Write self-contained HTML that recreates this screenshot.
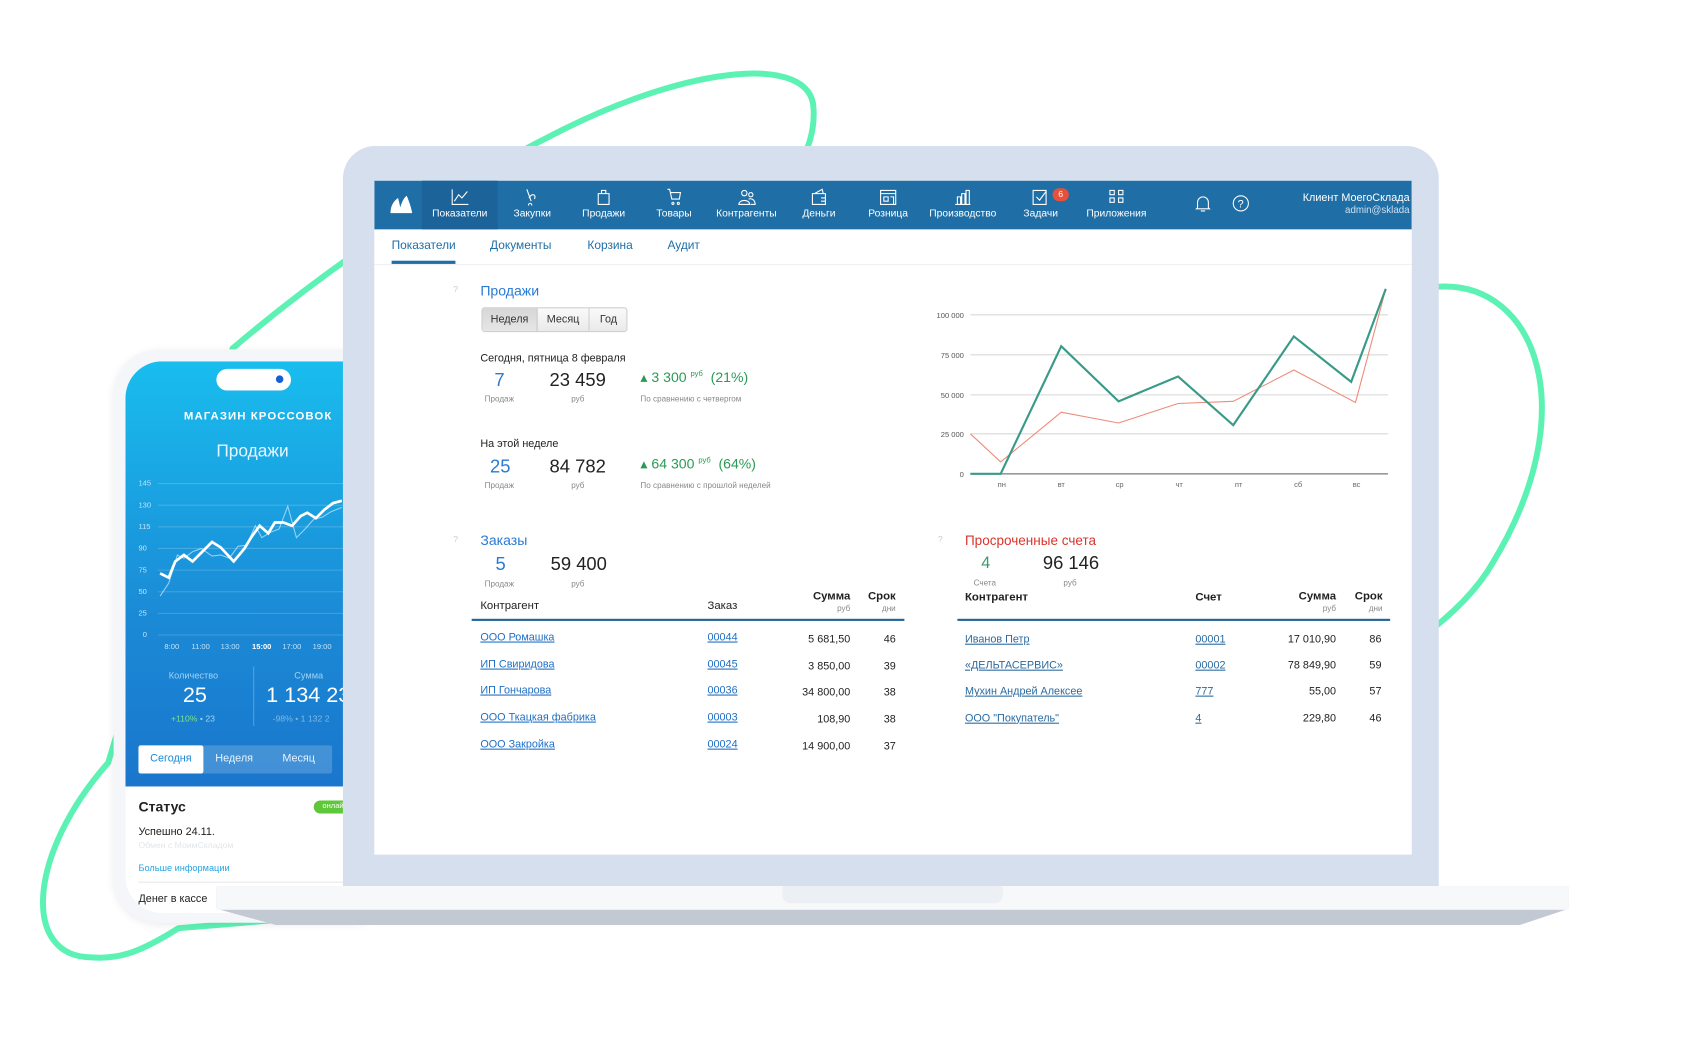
<!DOCTYPE html>
<html><head><meta charset="utf-8"><style>
*{margin:0;padding:0;box-sizing:border-box}
html,body{width:1696px;height:1040px;overflow:hidden;background:#fff;font-family:"Liberation Sans","DejaVu Sans",sans-serif}
#w{position:absolute;left:0;top:0;width:1568px;height:962px;transform:scale(1.0818);transform-origin:0 0}
.a{position:absolute;white-space:nowrap}
.nav .it{position:absolute;top:0;height:45px;width:70px;margin-left:-35px;text-align:center;color:#fff;font-size:9.5px}
.nav .it svg{display:block;margin:7px auto 2px;width:18px;height:16px}
.lnk{color:#1f6fc5;text-decoration:underline;font-size:10px}
.num{font-size:10px;color:#222;text-align:right}
.sm{font-size:7.5px;color:#888}
</style></head><body><div id="w">
<svg class="a" style="left:0;top:0" width="1568" height="962">
<path d="M85 885 C20 885 25 790 100 705 L215 322 C300 250 400 180 520 120 C640 60 750 50 752 100 C753 115 750 128 745 140 L1330 265 C1420 260 1465 380 1380 520 C1300 660 900 800 165 858 C130 880 110 887 85 885Z" fill="none" stroke="#5cf2b4" stroke-width="5.5"/>
</svg>
<!-- phone -->
<div class="a" style="left:105px;top:323px;width:260px;height:530px;background:#f4f6f9;border-radius:42px;box-shadow:0 2px 8px rgba(0,0,0,.08)"></div>
<div class="a" style="left:116px;top:334px;width:240px;height:510px;background:#fff;border-radius:34px;overflow:hidden">
 <div class="a" style="left:0;top:0;width:240px;height:393px;background:linear-gradient(#19bdee,#1b8ad6 60%,#1a76cc)"></div>
 <div class="a" style="left:84px;top:7px;width:69px;height:20px;background:#fff;border-radius:10px"><div class="a" style="left:55px;top:6px;width:7px;height:7px;border-radius:50%;background:#1560d0"></div></div>
 <div class="a" style="left:54px;top:45px;color:#fff;font-size:10.5px;font-weight:bold;letter-spacing:1px">МАГАЗИН КРОССОВОК</div>
 <div class="a" style="left:84px;top:75px;color:#e8f6ff;font-size:16px">Продажи</div>
 <svg class="a" style="left:0;top:105px" width="240" height="170">
  <g fill="#bfe4fa" font-size="7" font-family="Liberation Sans">
  <text x="12" y="10">145</text><text x="12" y="30">130</text><text x="12" y="50">115</text><text x="12" y="70">90</text><text x="12" y="90">75</text><text x="12" y="110">50</text><text x="12" y="130">25</text><text x="16" y="150">0</text>
  <text x="36" y="161">8:00</text><text x="61" y="161">11:00</text><text x="88" y="161">13:00</text><text x="117" y="161" fill="#fff" font-weight="bold">15:00</text><text x="145" y="161">17:00</text><text x="173" y="161">19:00</text></g>
  <g stroke="rgba(255,255,255,.18)"><path d="M30 8H240M30 28H240M30 48H240M30 68H240M30 88H240M30 108H240M30 128H240M30 148H240"/></g>
  <path d="M32 112 L40 100 L48 74 L54 77 L62 71 L70 68 L80 75 L88 74 L96 77 L104 66 L112 65 L120 47 L126 58 L134 53 L142 50 L150 29 L158 58 L166 50 L174 41 L182 39 L190 34 L200 30" fill="none" stroke="rgba(255,255,255,.55)" stroke-width="1"/>
  <path d="M32 91 L40 95 L46 80 L54 74 L62 80 L72 70 L80 62 L88 67 L100 80 L110 68 L116 58 L124 47 L132 54 L138 44 L146 44 L154 47 L162 38 L168 35 L176 40 L184 32 L192 26 L200 24" fill="none" stroke="#fff" stroke-width="2.5"/>
 </svg>
 <div class="a" style="left:40px;top:285px;color:#9fd4f3;font-size:8.5px">Количество</div>
 <div class="a" style="left:53px;top:298px;color:#fff;font-size:20px">25</div>
 <div class="a" style="left:42px;top:326px;font-size:8px;color:#7ae58a">+110% <span style="color:#9fd4f3">• 23</span></div>
 <div class="a" style="left:118px;top:282px;width:1px;height:55px;background:rgba(255,255,255,.25)"></div>
 <div class="a" style="left:156px;top:285px;color:#9fd4f3;font-size:8.5px">Сумма</div>
 <div class="a" style="left:130px;top:298px;color:#fff;font-size:20px">1 134 23</div>
 <div class="a" style="left:136px;top:326px;font-size:8px;color:#7fb8e4">-98% • 1 132 2</div>
 <div class="a" style="left:12px;top:355px;width:179px;height:26px;background:rgba(255,255,255,.18);border-radius:2px"></div>
 <div class="a" style="left:12px;top:355px;width:60px;height:26px;background:#fff;border-radius:2px;color:#1a8ad6;font-size:10px;line-height:26px;text-align:center">Сегодня</div>
 <div class="a" style="left:83px;top:362px;color:#e6f4ff;font-size:10px">Неделя</div>
 <div class="a" style="left:145px;top:362px;color:#e6f4ff;font-size:10px">Месяц</div>
 <div class="a" style="left:12px;top:404px;color:#222;font-size:13px;font-weight:bold">Статус</div>
 <div class="a" style="left:174px;top:406px;width:40px;height:12px;border-radius:6px;background:#5ec73a;color:#fff;font-size:7px;line-height:12px;padding-left:8px">онлайн</div>
 <div class="a" style="left:12px;top:430px;color:#222;font-size:10px">Успешно 24.11.</div>
 <div class="a" style="left:12px;top:443px;color:#e2e6ea;font-size:8px">Обмен с МоимСкладом</div>
 <div class="a" style="left:12px;top:463px;color:#29a3e0;font-size:8.5px">Больше информации</div>
 <div class="a" style="left:12px;top:481px;width:220px;height:1px;background:#e8e8e8"></div>
 <div class="a" style="left:12px;top:492px;color:#222;font-size:10px">Денег в кассе</div>
</div>
<!-- laptop base -->
<svg class="a" style="left:195px;top:815px" width="1260" height="45">
 <path d="M5 5 H1255 V25 L1210 40 H60 L5 25Z" fill="#c3c9d3"/>
 <rect x="5" y="4" width="1250" height="22" fill="#f7f8fa"/>
 <rect x="528" y="0" width="204" height="20" rx="8" fill="#eceff3"/>
</svg>
<!-- lid -->
<div class="a" style="left:317px;top:135px;width:1013px;height:684px;background:#d6dfee;border-radius:30px 30px 0 0"></div>
<div class="a" style="left:346px;top:167px;width:959px;height:623px;background:#fff;overflow:hidden">
 <div class="a nav" style="left:0;top:0;width:959px;height:45px;background:#1f6ea6">
  <svg class="a" style="left:13px;top:12px" width="24" height="20"><path d="M2 18 C2 10 6 6 9 4 C10 8 11 12 12 18Z M10 18 C11 10 14 4 17 2 C19 7 21 12 22 18Z" fill="#fff"/></svg>
  <div class="a" style="left:44px;top:0;width:70px;height:45px;background:#1b6399"></div>
  <div class="it" style="left:79px"><svg viewBox="0 0 18 16" fill="none" stroke="#fff" stroke-width="1"><path d="M2 1V15H17M4 12L8 6L11 9L16 3"/></svg>Показатели</div>
  <div class="it" style="left:146px"><svg viewBox="0 0 18 16" fill="none" stroke="#fff"><path d="M4 1L8 12M6 9C9 4 13 6 11 10M7 14A1.5 1.5 0 1 0 7.1 14"/></svg>Закупки</div>
  <div class="it" style="left:212px"><svg viewBox="0 0 18 16" fill="none" stroke="#fff"><path d="M4 5H14V15H4ZM7 5V2H11V5"/></svg>Продажи</div>
  <div class="it" style="left:277px"><svg viewBox="0 0 18 16" fill="none" stroke="#fff"><path d="M3 1H5L7 10H14L15 4H6M8 13A1 1 0 1 0 8.1 13M13 13A1 1 0 1 0 13.1 13"/></svg>Товары</div>
  <div class="it" style="left:344px"><svg viewBox="0 0 18 16" fill="none" stroke="#fff"><path d="M7 2A2.5 2.5 0 1 0 7.1 2M2 15C2 10 12 10 12 15ZM13 4A2 2 0 1 0 13.1 4M11 10C14 9 17 11 17 15H13"/></svg>Контрагенты</div>
  <div class="it" style="left:411px"><svg viewBox="0 0 18 16" fill="none" stroke="#fff"><path d="M3 5H15V15H3ZM5 5L12 1L13 5M11 9H15V12H11"/></svg>Деньги</div>
  <div class="it" style="left:475px"><svg viewBox="0 0 18 16" fill="none" stroke="#fff"><path d="M2 2H16V15H2ZM2 5H16M5 8H9V12H5ZM11 8H14V15"/></svg>Розница</div>
  <div class="it" style="left:544px"><svg viewBox="0 0 18 16" fill="none" stroke="#fff"><path d="M2 15H16M4 15V8H7V15M8 15V5H11V15M12 15V2H15V15"/></svg>Производство</div>
  <div class="it" style="left:616px"><svg viewBox="0 0 18 16" fill="none" stroke="#fff"><path d="M2 2H14V15H2ZM5 8L8 11L14 3"/></svg>Задачи</div>
  <div class="a" style="left:627px;top:7px;width:15px;height:12px;border-radius:6px;background:#e8503a;color:#fff;font-size:8px;text-align:center;line-height:12px">6</div>
  <div class="it" style="left:686px"><svg viewBox="0 0 18 16" fill="none" stroke="#fff"><path d="M3 2H7V6H3ZM11 2H15V6H11ZM3 9H7V13H3ZM11 9H15V13H11Z"/></svg>Приложения</div>
  <svg class="a" style="left:758px;top:12px" width="16" height="18" fill="none" stroke="#fff"><path d="M3 13V8A5 5 0 0 1 13 8V13L14 14H2ZM6 16H10"/></svg>
  <svg class="a" style="left:793px;top:12px" width="18" height="18" fill="none" stroke="#fff"><circle cx="8" cy="9" r="7"/><text x="5" y="13" fill="#fff" stroke="none" font-size="10" font-family="Liberation Sans">?</text></svg>
  <div class="a" style="right:2px;top:11px;color:#fff;font-size:10px;text-align:right;line-height:11px">Клиент МоегоСклада<br><span style="font-size:9px;color:#cfe2f2">admin@sklada</span></div>
 </div>
 <div class="a" style="left:16px;top:54px;color:#1f6ea6;font-size:11px">Показатели</div>
 <div class="a" style="left:16px;top:74px;width:59px;height:3px;background:#1f6ea6"></div>
 <div class="a" style="left:107px;top:54px;color:#1f6ea6;font-size:11px">Документы</div>
 <div class="a" style="left:197px;top:54px;color:#1f6ea6;font-size:11px">Корзина</div>
 <div class="a" style="left:271px;top:54px;color:#1f6ea6;font-size:11px">Аудит</div>
 <div class="a" style="left:0;top:77px;width:959px;height:1px;background:#eef0f3"></div>
</div>
<!-- content -->
<div class="a" style="left:419px;top:263px;color:#bcd;font-size:8px">?</div>
<div class="a" style="left:444px;top:261px;color:#2a7bd4;font-size:13px">Продажи</div>
<div class="a" style="left:445px;top:284px;width:135px;height:23px;border:1px solid #cfcfcf;border-radius:3px;background:linear-gradient(#fafafa,#eaeaea);font-size:10px;color:#333">
 <div class="a" style="left:0;top:0;width:51px;height:21px;background:linear-gradient(#d6d6d6,#e6e6e6);border-right:1px solid #c8c8c8;line-height:21px;text-align:center">Неделя</div>
 <div class="a" style="left:51px;top:0;width:48px;height:21px;border-right:1px solid #d0d0d0;line-height:21px;text-align:center">Месяц</div>
 <div class="a" style="left:99px;top:0;width:35px;line-height:21px;text-align:center">Год</div>
</div>
<div class="a" style="left:444px;top:326px;font-size:10px;color:#222">Сегодня, пятница 8 февраля</div>
<div class="a" style="left:457px;top:342px;font-size:17px;color:#2a7bd4">7</div>
<div class="a" style="left:448px;top:358px" ><span class="sm">Продаж</span></div>
<div class="a" style="left:508px;top:342px;font-size:17px;color:#222">23 459</div>
<div class="a" style="left:528px;top:358px"><span class="sm">руб</span></div>
<div class="a" style="left:592px;top:341px;font-size:13px;color:#2a9a55">▴ 3 300 <sup style="font-size:7px">руб</sup>&nbsp; (21%)</div>
<div class="a" style="left:592px;top:358px"><span class="sm">По сравнению с четвергом</span></div>
<div class="a" style="left:444px;top:405px;font-size:10px;color:#222">На этой неделе</div>
<div class="a" style="left:453px;top:422px;font-size:17px;color:#2a7bd4">25</div>
<div class="a" style="left:448px;top:438px"><span class="sm">Продаж</span></div>
<div class="a" style="left:508px;top:422px;font-size:17px;color:#222">84 782</div>
<div class="a" style="left:528px;top:438px"><span class="sm">руб</span></div>
<div class="a" style="left:592px;top:421px;font-size:13px;color:#2a9a55">▴ 64 300 <sup style="font-size:7px">руб</sup>&nbsp; (64%)</div>
<div class="a" style="left:592px;top:438px"><span class="sm">По сравнению с прошлой неделей</span></div>
<svg class="a" style="left:850px;top:260px" width="450" height="200">
 <g font-family="Liberation Sans" font-size="7" fill="#555" text-anchor="end"><text x="41" y="34">100 000</text><text x="41" y="71">75 000</text><text x="41" y="108">50 000</text><text x="41" y="144">25 000</text><text x="41" y="181">0</text></g>
 <g stroke="#d8d8d8"><path d="M47 31H433M47 68H433M47 105H433M47 141H433"/></g>
 <path d="M47 178H433" stroke="#999" stroke-width="1.5"/>
 <g font-family="Liberation Sans" font-size="7" fill="#666" text-anchor="middle"><text x="76" y="190">пн</text><text x="131" y="190">вт</text><text x="185" y="190">ср</text><text x="240" y="190">чт</text><text x="295" y="190">пт</text><text x="350" y="190">сб</text><text x="404" y="190">вс</text></g>
 <path d="M47 141 L75 167 L131 121 L184 131 L239 113 L290 111 L346 82 L403 112 L431 7" fill="none" stroke="#ee8a7a" stroke-width="1"/>
 <path d="M47 178 L75 178 L131 60 L184 111 L239 88 L290 133 L346 51 L399 93 L431 7" fill="none" stroke="#3a9a88" stroke-width="2"/>
</svg>
<div class="a" style="left:419px;top:494px;color:#bcd;font-size:8px">?</div>
<div class="a" style="left:444px;top:492px;color:#2a7bd4;font-size:13px">Заказы</div>
<div class="a" style="left:458px;top:512px;font-size:17px;color:#2a7bd4">5</div>
<div class="a" style="left:448px;top:529px"><span class="sm">Продаж</span></div>
<div class="a" style="left:509px;top:512px;font-size:17px;color:#222">59 400</div>
<div class="a" style="left:528px;top:529px"><span class="sm">руб</span></div>
<div class="a" style="left:444px;top:554px;font-size:10.5px;color:#222">Контрагент</div>
<div class="a" style="left:654px;top:554px;font-size:10.5px;color:#222">Заказ</div>
<div class="a" style="left:740px;top:546px;width:46px;text-align:right;font-size:10.5px;font-weight:bold;color:#222;line-height:11px">Сумма<br><span class="sm" style="font-weight:normal">руб</span></div>
<div class="a" style="left:790px;top:546px;width:38px;text-align:right;font-size:10.5px;font-weight:bold;color:#222;line-height:11px">Срок<br><span class="sm" style="font-weight:normal">дни</span></div>
<div class="a" style="left:436px;top:572px;width:400px;height:2px;background:#24679c"></div>
<div class="a" style="left:444px;top:578px;line-height:24.7px"><div class="lnk">ООО Ромашка</div><div class="lnk">ИП Свиридова</div><div class="lnk">ИП Гончарова</div><div class="lnk">ООО Ткацкая фабрика</div><div class="lnk">ООО Закройка</div></div>
<div class="a" style="left:654px;top:578px;line-height:24.7px"><div class="lnk">00044</div><div class="lnk">00045</div><div class="lnk">00036</div><div class="lnk">00003</div><div class="lnk">00024</div></div>
<div class="a num" style="left:700px;top:580px;width:86px;line-height:24.7px">5 681,50<br>3 850,00<br>34 800,00<br>108,90<br>14 900,00</div>
<div class="a num" style="left:800px;top:580px;width:28px;line-height:24.7px">46<br>39<br>38<br>38<br>37</div>
<div class="a" style="left:867px;top:494px;color:#bcd;font-size:8px">?</div>
<div class="a" style="left:892px;top:493px;color:#d9342b;font-size:12.5px">Просроченные счета</div>
<div class="a" style="left:907px;top:512px;font-size:15px;color:#3a9a6a">4</div>
<div class="a" style="left:900px;top:528px"><span class="sm">Счета</span></div>
<div class="a" style="left:964px;top:511px;font-size:17px;color:#222">96 146</div>
<div class="a" style="left:983px;top:528px"><span class="sm">руб</span></div>
<div class="a" style="left:892px;top:546px;font-size:10.5px;font-weight:bold;color:#222">Контрагент</div>
<div class="a" style="left:1105px;top:546px;font-size:10.5px;font-weight:bold;color:#222">Счет</div>
<div class="a" style="left:1189px;top:546px;width:46px;text-align:right;font-size:10.5px;font-weight:bold;color:#222;line-height:11px">Сумма<br><span class="sm" style="font-weight:normal">руб</span></div>
<div class="a" style="left:1240px;top:546px;width:38px;text-align:right;font-size:10.5px;font-weight:bold;color:#222;line-height:11px">Срок<br><span class="sm" style="font-weight:normal">дни</span></div>
<div class="a" style="left:885px;top:572px;width:400px;height:2px;background:#24679c"></div>
<div class="a" style="left:892px;top:580px;line-height:24.2px"><div class="lnk" style="color:#2a6aa0">Иванов Петр</div><div class="lnk" style="color:#2a6aa0">«ДЕЛЬТАСЕРВИС»</div><div class="lnk" style="color:#2a6aa0">Мухин Андрей Алексее</div><div class="lnk" style="color:#2a6aa0">ООО "Покупатель"</div></div>
<div class="a" style="left:1105px;top:580px;line-height:24.2px"><div class="lnk" style="color:#2a6aa0">00001</div><div class="lnk" style="color:#2a6aa0">00002</div><div class="lnk" style="color:#2a6aa0">777</div><div class="lnk" style="color:#2a6aa0">4</div></div>
<div class="a num" style="left:1150px;top:580px;width:85px;line-height:24.2px">17 010,90<br>78 849,90<br>55,00<br>229,80</div>
<div class="a num" style="left:1248px;top:580px;width:29px;line-height:24.2px">86<br>59<br>57<br>46</div>
</div></body></html>
